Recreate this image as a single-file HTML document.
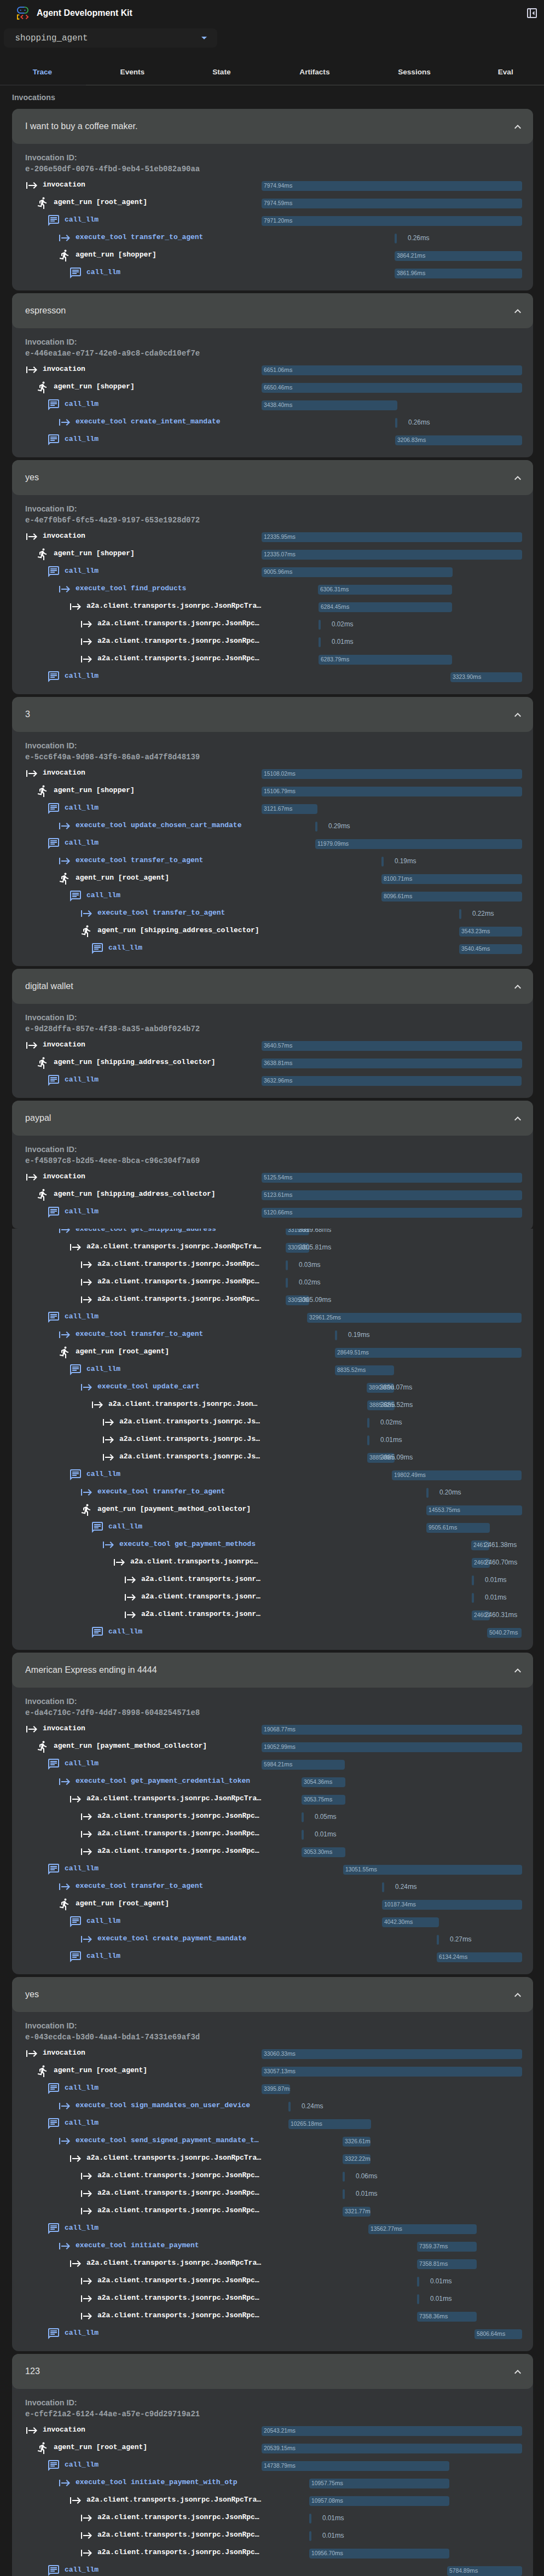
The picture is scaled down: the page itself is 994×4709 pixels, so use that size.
<!DOCTYPE html>
<html><head><meta charset="utf-8"><title>Agent Development Kit</title>
<style>

html,body{margin:0;padding:0;}
body{width:994px;height:4709px;background:#1b1b1b;position:relative;overflow:hidden;font-family:"Liberation Sans",sans-serif;}
.abs{position:absolute;}
.title{position:absolute;left:67px;top:13.700px;font-size:15.9px;font-weight:bold;color:#fff;line-height:20px;white-space:pre;}
.sel{position:absolute;left:7px;top:52px;width:390px;height:35px;border-radius:8px;background:#202020;}
.seltxt{position:absolute;left:27.500px;top:59.700px;font-family:"Liberation Mono",monospace;font-size:15.85px;color:#c4c7c5;line-height:20px;white-space:pre;}
.tab{position:absolute;top:121.800px;font-size:13.6px;font-weight:bold;color:#e3e3e3;line-height:20px;white-space:pre;transform:translateX(-50%);}
.tab.act{color:#8ab4f8;}
.tabline{position:absolute;left:0;top:155px;width:994px;height:1px;background:#444746;}
.tabline2{position:absolute;left:0;top:155px;width:157px;height:1px;background:#363839;}
.invs{position:absolute;left:22px;top:167.600px;font-size:14.2px;font-weight:bold;color:#9aa0a6;line-height:20px;white-space:pre;}
.card{position:absolute;left:22px;width:952px;background:#333537;border-radius:12px;}
.hd{position:absolute;left:0;top:0;width:952px;height:64px;background:#444746;border-radius:12px;}
.hdt{position:absolute;left:24px;top:20px;font-size:16.1px;color:#e3e3e3;line-height:22px;white-space:pre;}
.chev{position:absolute;left:912.300px;top:20.900px;width:24px;height:24px;fill:#e3e3e3;}
.idl{position:absolute;left:24px;top:78.500px;font-size:14.3px;font-weight:bold;color:#9aa0a6;line-height:20px;white-space:pre;}
.idv{position:absolute;left:24px;top:99.600px;font-family:"Liberation Mono",monospace;font-size:14px;font-weight:bold;color:#9aa0a6;line-height:20px;white-space:pre;}
.ic{position:absolute;width:24px;height:24px;}
.w{fill:#fff;color:#fff;}
.b{fill:#8ab4f8;color:#8ab4f8;}
.lb{position:absolute;font-family:"Liberation Mono",monospace;font-size:12.97px;font-weight:bold;line-height:20px;white-space:pre;overflow:hidden;text-overflow:ellipsis;}
.bar{position:absolute;height:18px;background:#2f4d65;border-radius:4px;box-sizing:border-box;padding-left:4px;overflow:hidden;font-size:10.3px;line-height:16.500px;color:#a3bacb;white-space:pre;}
.bar i{font-style:normal;font-size:11.3px;}
.sd{position:absolute;font-size:12.5px;line-height:15px;color:#a3bacb;white-space:pre;transform:scaleX(0.94);transform-origin:0 0;}
.sd i{font-style:normal;font-size:13.4px;}

</style></head><body>
<svg class="abs" style="left:28px;top:9px" width="30" height="30" viewBox="0 0 30 30">
<path d="M16.800 4.050 H9.350 a5.450 5.450 0 0 0 0 10.900 H16.800" fill="none" stroke="#4285f4" stroke-width="1.800"/>
<path d="M16.800 4.050 H17.650 a5.450 5.450 0 0 1 0 10.900 H16.800" fill="none" stroke="#34a853" stroke-width="1.800"/>
<circle cx="9.700" cy="9.700" r="1" fill="#4285f4"/><circle cx="17.500" cy="9.700" r="1" fill="#4285f4"/>
<path d="M7.400 18.400 H3.900 V25.750 H7.400" fill="none" stroke="#fbbc04" stroke-width="1.800"/>
<path d="M14 18.500 L10.300 22 L14 25.500" fill="none" stroke="#ea4335" stroke-width="1.800"/>
<path d="M19.500 18.500 L23.200 22 L19.500 25.500" fill="none" stroke="#ea4335" stroke-width="1.800"/>
</svg>
<div class="title">Agent Development Kit</div>
<svg class="abs" style="left:960px;top:12px" width="24" height="24" viewBox="0 0 24 24" fill="#d2d3e4">
<path fill-rule="evenodd" d="M5 3h14a2 2 0 0 1 2 2v14a2 2 0 0 1-2 2H5a2 2 0 0 1-2-2V5a2 2 0 0 1 2-2zm0 2v14h3V5H5zm5 0v14h9V5h-9z"/><path d="M16.500 8 v8 l-4-4z"/></svg>
<div class="sel"></div><div class="seltxt">shopping_agent</div>
<svg class="abs" style="left:368.300px;top:66.500px" width="10" height="5" viewBox="0 0 10 5"><path d="M0 0h10L5 5z" fill="#8ab4f8"/></svg>
<div class="tab act" style="left:77.4px">Trace</div>
<div class="tab" style="left:241.9px">Events</div>
<div class="tab" style="left:404.9px">State</div>
<div class="tab" style="left:574.9px">Artifacts</div>
<div class="tab" style="left:757px">Sessions</div>
<div class="tab" style="left:923.7px">Eval</div>
<div class="tabline"></div><div class="tabline2"></div>
<div class="invs">Invocations</div>
<div class="card" style="top:199px;height:332px">
<div class="hd"><div class="hdt">I want to buy a coffee maker.</div><svg class="chev" viewBox="0 0 24 24"><path d="M7.410 15.410L12 10.830l4.590 4.580L18 14l-6-6-6 6z"/></svg></div>
<div class="idl">Invocation ID:</div><div class="idv">e-206e50df-0076-4fbd-9eb4-51eb082a90aa</div>
<svg class="ic w" style="left:24px;top:128px" viewBox="0 0 24 24"><path d="M14.59 7.41L18.17 11H6v2h12.17l-3.59 3.59L16 18l6-6-6-6-1.41 1.41zM2 6v12h2V6H2z"/></svg>
<div class="lb w" style="left:55.9px;top:128.5px;width:399.9px">invocation</div>
<div class="bar" style="left:456px;top:132px;width:476px">7974.94<i>ms</i></div>
<svg class="ic w" style="left:44px;top:160px" viewBox="0 0 24 24"><path d="M13.49 5.48c1.1 0 2-.9 2-2s-.9-2-2-2-2 .9-2 2 .9 2 2 2zm-3.6 13.9l1-4.4 2.1 2v6h2v-7.5l-2.1-2 .6-3c1.3 1.5 3.3 2.5 5.5 2.5v-2c-1.9 0-3.5-1-4.3-2.4l-1-1.6c-.4-.6-1-1-1.7-1-.3 0-.5.1-.8.1l-5.2 2.2v4.700h2v-3.400l1.800-.700-1.600 8.100-4.900-1-.400 2 7 1.400z"/></svg>
<div class="lb w" style="left:75.9px;top:160.5px;width:379.9px">agent_run [root_agent]</div>
<div class="bar" style="left:456px;top:164px;width:476px">7974.59<i>ms</i></div>
<svg class="ic b" style="left:64px;top:192px" viewBox="0 0 24 24"><path d="M4 4h16v12H5.170L4 17.170V4m0-2c-1.100 0-1.990.900-1.990 2L2 22l4-4h14c1.100 0 2-.900 2-2V4c0-1.100-.900-2-2-2H4zm2 10h8v2H6v-2zm0-3h12v2H6V9zm0-3h12v2H6V6z"/></svg>
<div class="lb b" style="left:95.9px;top:192.5px;width:359.9px">call_llm</div>
<div class="bar" style="left:456px;top:196px;width:476px">7971.20<i>ms</i></div>
<svg class="ic b" style="left:84px;top:224px" viewBox="0 0 24 24"><path d="M14.59 7.41L18.17 11H6v2h12.17l-3.59 3.59L16 18l6-6-6-6-1.41 1.41zM2 6v12h2V6H2z"/></svg>
<div class="lb b" style="left:115.9px;top:224.5px;width:339.9px">execute_tool transfer_to_agent</div>
<div class="bar" style="left:699px;top:228px;width:4px"></div>
<div class="sd" style="left:723.0px;top:228px">0.26<i>ms</i></div>
<svg class="ic w" style="left:84px;top:256px" viewBox="0 0 24 24"><path d="M13.49 5.48c1.1 0 2-.9 2-2s-.9-2-2-2-2 .9-2 2 .9 2 2 2zm-3.6 13.9l1-4.4 2.1 2v6h2v-7.5l-2.1-2 .6-3c1.3 1.5 3.3 2.5 5.5 2.5v-2c-1.9 0-3.5-1-4.3-2.4l-1-1.6c-.4-.6-1-1-1.7-1-.3 0-.5.1-.8.1l-5.2 2.2v4.700h2v-3.400l1.800-.700-1.600 8.100-4.900-1-.400 2 7 1.400z"/></svg>
<div class="lb w" style="left:115.9px;top:256.5px;width:339.9px">agent_run [shopper]</div>
<div class="bar" style="left:699px;top:260px;width:233px">3864.21<i>ms</i></div>
<svg class="ic b" style="left:104px;top:288px" viewBox="0 0 24 24"><path d="M4 4h16v12H5.170L4 17.170V4m0-2c-1.100 0-1.990.900-1.990 2L2 22l4-4h14c1.100 0 2-.900 2-2V4c0-1.100-.900-2-2-2H4zm2 10h8v2H6v-2zm0-3h12v2H6V9zm0-3h12v2H6V6z"/></svg>
<div class="lb b" style="left:135.9px;top:288.5px;width:319.9px">call_llm</div>
<div class="bar" style="left:699px;top:292px;width:233px">3861.96<i>ms</i></div>
</div>
<div class="card" style="top:536px;height:300px">
<div class="hd"><div class="hdt">espresson</div><svg class="chev" viewBox="0 0 24 24"><path d="M7.410 15.410L12 10.830l4.590 4.580L18 14l-6-6-6 6z"/></svg></div>
<div class="idl">Invocation ID:</div><div class="idv">e-446ea1ae-e717-42e0-a9c8-cda0cd10ef7e</div>
<svg class="ic w" style="left:24px;top:128px" viewBox="0 0 24 24"><path d="M14.59 7.41L18.17 11H6v2h12.17l-3.59 3.59L16 18l6-6-6-6-1.41 1.41zM2 6v12h2V6H2z"/></svg>
<div class="lb w" style="left:55.9px;top:128.5px;width:399.9px">invocation</div>
<div class="bar" style="left:456px;top:132px;width:476px">6651.06<i>ms</i></div>
<svg class="ic w" style="left:44px;top:160px" viewBox="0 0 24 24"><path d="M13.49 5.48c1.1 0 2-.9 2-2s-.9-2-2-2-2 .9-2 2 .9 2 2 2zm-3.6 13.9l1-4.4 2.1 2v6h2v-7.5l-2.1-2 .6-3c1.3 1.5 3.3 2.5 5.5 2.5v-2c-1.9 0-3.5-1-4.3-2.4l-1-1.6c-.4-.6-1-1-1.7-1-.3 0-.5.1-.8.1l-5.2 2.2v4.700h2v-3.400l1.800-.700-1.600 8.100-4.900-1-.400 2 7 1.400z"/></svg>
<div class="lb w" style="left:75.9px;top:160.5px;width:379.9px">agent_run [shopper]</div>
<div class="bar" style="left:456px;top:164px;width:476px">6650.46<i>ms</i></div>
<svg class="ic b" style="left:64px;top:192px" viewBox="0 0 24 24"><path d="M4 4h16v12H5.170L4 17.170V4m0-2c-1.100 0-1.990.900-1.990 2L2 22l4-4h14c1.100 0 2-.900 2-2V4c0-1.100-.900-2-2-2H4zm2 10h8v2H6v-2zm0-3h12v2H6V9zm0-3h12v2H6V6z"/></svg>
<div class="lb b" style="left:95.9px;top:192.5px;width:359.9px">call_llm</div>
<div class="bar" style="left:456px;top:196px;width:248px">3438.40<i>ms</i></div>
<svg class="ic b" style="left:84px;top:224px" viewBox="0 0 24 24"><path d="M14.59 7.41L18.17 11H6v2h12.17l-3.59 3.59L16 18l6-6-6-6-1.41 1.41zM2 6v12h2V6H2z"/></svg>
<div class="lb b" style="left:115.9px;top:224.5px;width:339.9px">execute_tool create_intent_mandate</div>
<div class="bar" style="left:700px;top:228px;width:4px"></div>
<div class="sd" style="left:724.0px;top:228px">0.26<i>ms</i></div>
<svg class="ic b" style="left:64px;top:256px" viewBox="0 0 24 24"><path d="M4 4h16v12H5.170L4 17.170V4m0-2c-1.100 0-1.990.900-1.990 2L2 22l4-4h14c1.100 0 2-.900 2-2V4c0-1.100-.900-2-2-2H4zm2 10h8v2H6v-2zm0-3h12v2H6V9zm0-3h12v2H6V6z"/></svg>
<div class="lb b" style="left:95.9px;top:256.5px;width:359.9px">call_llm</div>
<div class="bar" style="left:700px;top:260px;width:232px">3206.83<i>ms</i></div>
</div>
<div class="card" style="top:841px;height:428px">
<div class="hd"><div class="hdt">yes</div><svg class="chev" viewBox="0 0 24 24"><path d="M7.410 15.410L12 10.830l4.590 4.580L18 14l-6-6-6 6z"/></svg></div>
<div class="idl">Invocation ID:</div><div class="idv">e-4e7f0b6f-6fc5-4a29-9197-653e1928d072</div>
<svg class="ic w" style="left:24px;top:128px" viewBox="0 0 24 24"><path d="M14.59 7.41L18.17 11H6v2h12.17l-3.59 3.59L16 18l6-6-6-6-1.41 1.41zM2 6v12h2V6H2z"/></svg>
<div class="lb w" style="left:55.9px;top:128.5px;width:399.9px">invocation</div>
<div class="bar" style="left:456px;top:132px;width:476px">12335.95<i>ms</i></div>
<svg class="ic w" style="left:44px;top:160px" viewBox="0 0 24 24"><path d="M13.49 5.48c1.1 0 2-.9 2-2s-.9-2-2-2-2 .9-2 2 .9 2 2 2zm-3.6 13.9l1-4.4 2.1 2v6h2v-7.5l-2.1-2 .6-3c1.3 1.5 3.3 2.5 5.5 2.5v-2c-1.9 0-3.5-1-4.3-2.4l-1-1.6c-.4-.6-1-1-1.7-1-.3 0-.5.1-.8.1l-5.2 2.2v4.700h2v-3.400l1.800-.700-1.600 8.100-4.900-1-.400 2 7 1.400z"/></svg>
<div class="lb w" style="left:75.9px;top:160.5px;width:379.9px">agent_run [shopper]</div>
<div class="bar" style="left:456px;top:164px;width:476px">12335.07<i>ms</i></div>
<svg class="ic b" style="left:64px;top:192px" viewBox="0 0 24 24"><path d="M4 4h16v12H5.170L4 17.170V4m0-2c-1.100 0-1.990.900-1.990 2L2 22l4-4h14c1.100 0 2-.900 2-2V4c0-1.100-.900-2-2-2H4zm2 10h8v2H6v-2zm0-3h12v2H6V9zm0-3h12v2H6V6z"/></svg>
<div class="lb b" style="left:95.9px;top:192.5px;width:359.9px">call_llm</div>
<div class="bar" style="left:456px;top:196px;width:349px">9005.96<i>ms</i></div>
<svg class="ic b" style="left:84px;top:224px" viewBox="0 0 24 24"><path d="M14.59 7.41L18.17 11H6v2h12.17l-3.59 3.59L16 18l6-6-6-6-1.41 1.41zM2 6v12h2V6H2z"/></svg>
<div class="lb b" style="left:115.9px;top:224.5px;width:339.9px">execute_tool find_products</div>
<div class="bar" style="left:559px;top:228px;width:245px">6306.31<i>ms</i></div>
<svg class="ic w" style="left:104px;top:256px" viewBox="0 0 24 24"><path d="M14.59 7.41L18.17 11H6v2h12.17l-3.59 3.59L16 18l6-6-6-6-1.41 1.41zM2 6v12h2V6H2z"/></svg>
<div class="lb w" style="left:135.9px;top:256.5px;width:319.9px">a2a.client.transports.jsonrpc.JsonRpcTransport.send_message</div>
<div class="bar" style="left:560px;top:260px;width:244px">6284.45<i>ms</i></div>
<svg class="ic w" style="left:124px;top:288px" viewBox="0 0 24 24"><path d="M14.59 7.41L18.17 11H6v2h12.17l-3.59 3.59L16 18l6-6-6-6-1.41 1.41zM2 6v12h2V6H2z"/></svg>
<div class="lb w" style="left:155.9px;top:288.5px;width:299.9px">a2a.client.transports.jsonrpc.JsonRpcTransport.send_message</div>
<div class="bar" style="left:560px;top:292px;width:4px"></div>
<div class="sd" style="left:584.0px;top:292px">0.02<i>ms</i></div>
<svg class="ic w" style="left:124px;top:320px" viewBox="0 0 24 24"><path d="M14.59 7.41L18.17 11H6v2h12.17l-3.59 3.59L16 18l6-6-6-6-1.41 1.41zM2 6v12h2V6H2z"/></svg>
<div class="lb w" style="left:155.9px;top:320.5px;width:299.9px">a2a.client.transports.jsonrpc.JsonRpcTransport.send_message</div>
<div class="bar" style="left:560px;top:324px;width:4px"></div>
<div class="sd" style="left:584.0px;top:324px">0.01<i>ms</i></div>
<svg class="ic w" style="left:124px;top:352px" viewBox="0 0 24 24"><path d="M14.59 7.41L18.17 11H6v2h12.17l-3.59 3.59L16 18l6-6-6-6-1.41 1.41zM2 6v12h2V6H2z"/></svg>
<div class="lb w" style="left:155.9px;top:352.5px;width:299.9px">a2a.client.transports.jsonrpc.JsonRpcTransport.send_message</div>
<div class="bar" style="left:560px;top:356px;width:244px">6283.79<i>ms</i></div>
<svg class="ic b" style="left:64px;top:384px" viewBox="0 0 24 24"><path d="M4 4h16v12H5.170L4 17.170V4m0-2c-1.100 0-1.990.900-1.990 2L2 22l4-4h14c1.100 0 2-.900 2-2V4c0-1.100-.900-2-2-2H4zm2 10h8v2H6v-2zm0-3h12v2H6V9zm0-3h12v2H6V6z"/></svg>
<div class="lb b" style="left:95.9px;top:384.5px;width:359.9px">call_llm</div>
<div class="bar" style="left:801px;top:388px;width:131px">3323.90<i>ms</i></div>
</div>
<div class="card" style="top:1274px;height:492px">
<div class="hd"><div class="hdt">3</div><svg class="chev" viewBox="0 0 24 24"><path d="M7.410 15.410L12 10.830l4.590 4.580L18 14l-6-6-6 6z"/></svg></div>
<div class="idl">Invocation ID:</div><div class="idv">e-5cc6f49a-9d98-43f6-86a0-ad47f8d48139</div>
<svg class="ic w" style="left:24px;top:128px" viewBox="0 0 24 24"><path d="M14.59 7.41L18.17 11H6v2h12.17l-3.59 3.59L16 18l6-6-6-6-1.41 1.41zM2 6v12h2V6H2z"/></svg>
<div class="lb w" style="left:55.9px;top:128.5px;width:399.9px">invocation</div>
<div class="bar" style="left:456px;top:132px;width:476px">15108.02<i>ms</i></div>
<svg class="ic w" style="left:44px;top:160px" viewBox="0 0 24 24"><path d="M13.49 5.48c1.1 0 2-.9 2-2s-.9-2-2-2-2 .9-2 2 .9 2 2 2zm-3.6 13.9l1-4.4 2.1 2v6h2v-7.5l-2.1-2 .6-3c1.3 1.5 3.3 2.5 5.5 2.5v-2c-1.9 0-3.5-1-4.3-2.4l-1-1.6c-.4-.6-1-1-1.7-1-.3 0-.5.1-.8.1l-5.2 2.2v4.700h2v-3.400l1.800-.700-1.600 8.100-4.900-1-.400 2 7 1.400z"/></svg>
<div class="lb w" style="left:75.9px;top:160.5px;width:379.9px">agent_run [shopper]</div>
<div class="bar" style="left:456px;top:164px;width:476px">15106.79<i>ms</i></div>
<svg class="ic b" style="left:64px;top:192px" viewBox="0 0 24 24"><path d="M4 4h16v12H5.170L4 17.170V4m0-2c-1.100 0-1.990.900-1.990 2L2 22l4-4h14c1.100 0 2-.900 2-2V4c0-1.100-.900-2-2-2H4zm2 10h8v2H6v-2zm0-3h12v2H6V9zm0-3h12v2H6V6z"/></svg>
<div class="lb b" style="left:95.9px;top:192.5px;width:359.9px">call_llm</div>
<div class="bar" style="left:456px;top:196px;width:102px">3121.67<i>ms</i></div>
<svg class="ic b" style="left:84px;top:224px" viewBox="0 0 24 24"><path d="M14.59 7.41L18.17 11H6v2h12.17l-3.59 3.59L16 18l6-6-6-6-1.41 1.41zM2 6v12h2V6H2z"/></svg>
<div class="lb b" style="left:115.9px;top:224.5px;width:339.9px">execute_tool update_chosen_cart_mandate</div>
<div class="bar" style="left:554px;top:228px;width:4px"></div>
<div class="sd" style="left:578.0px;top:228px">0.29<i>ms</i></div>
<svg class="ic b" style="left:64px;top:256px" viewBox="0 0 24 24"><path d="M4 4h16v12H5.170L4 17.170V4m0-2c-1.100 0-1.990.900-1.990 2L2 22l4-4h14c1.100 0 2-.900 2-2V4c0-1.100-.900-2-2-2H4zm2 10h8v2H6v-2zm0-3h12v2H6V9zm0-3h12v2H6V6z"/></svg>
<div class="lb b" style="left:95.9px;top:256.5px;width:359.9px">call_llm</div>
<div class="bar" style="left:554px;top:260px;width:378px">11979.09<i>ms</i></div>
<svg class="ic b" style="left:84px;top:288px" viewBox="0 0 24 24"><path d="M14.59 7.41L18.17 11H6v2h12.17l-3.59 3.59L16 18l6-6-6-6-1.41 1.41zM2 6v12h2V6H2z"/></svg>
<div class="lb b" style="left:115.9px;top:288.5px;width:339.9px">execute_tool transfer_to_agent</div>
<div class="bar" style="left:675px;top:292px;width:4px"></div>
<div class="sd" style="left:699.0px;top:292px">0.19<i>ms</i></div>
<svg class="ic w" style="left:84px;top:320px" viewBox="0 0 24 24"><path d="M13.49 5.48c1.1 0 2-.9 2-2s-.9-2-2-2-2 .9-2 2 .9 2 2 2zm-3.6 13.9l1-4.4 2.1 2v6h2v-7.5l-2.1-2 .6-3c1.3 1.5 3.3 2.5 5.5 2.5v-2c-1.9 0-3.5-1-4.3-2.4l-1-1.6c-.4-.6-1-1-1.7-1-.3 0-.5.1-.8.1l-5.2 2.2v4.700h2v-3.400l1.800-.700-1.600 8.100-4.900-1-.400 2 7 1.400z"/></svg>
<div class="lb w" style="left:115.9px;top:320.5px;width:339.9px">agent_run [root_agent]</div>
<div class="bar" style="left:675px;top:324px;width:257px">8100.71<i>ms</i></div>
<svg class="ic b" style="left:104px;top:352px" viewBox="0 0 24 24"><path d="M4 4h16v12H5.170L4 17.170V4m0-2c-1.100 0-1.990.900-1.990 2L2 22l4-4h14c1.100 0 2-.900 2-2V4c0-1.100-.900-2-2-2H4zm2 10h8v2H6v-2zm0-3h12v2H6V9zm0-3h12v2H6V6z"/></svg>
<div class="lb b" style="left:135.9px;top:352.5px;width:319.9px">call_llm</div>
<div class="bar" style="left:675px;top:356px;width:257px">8096.61<i>ms</i></div>
<svg class="ic b" style="left:124px;top:384px" viewBox="0 0 24 24"><path d="M14.59 7.41L18.17 11H6v2h12.17l-3.59 3.59L16 18l6-6-6-6-1.41 1.41zM2 6v12h2V6H2z"/></svg>
<div class="lb b" style="left:155.9px;top:384.5px;width:299.9px">execute_tool transfer_to_agent</div>
<div class="bar" style="left:817px;top:388px;width:4px"></div>
<div class="sd" style="left:841.0px;top:388px">0.22<i>ms</i></div>
<svg class="ic w" style="left:124px;top:416px" viewBox="0 0 24 24"><path d="M13.49 5.48c1.1 0 2-.9 2-2s-.9-2-2-2-2 .9-2 2 .9 2 2 2zm-3.6 13.9l1-4.4 2.1 2v6h2v-7.5l-2.1-2 .6-3c1.3 1.5 3.3 2.5 5.5 2.5v-2c-1.9 0-3.5-1-4.3-2.4l-1-1.6c-.4-.6-1-1-1.7-1-.3 0-.5.1-.8.1l-5.2 2.2v4.700h2v-3.400l1.800-.700-1.600 8.100-4.900-1-.400 2 7 1.400z"/></svg>
<div class="lb w" style="left:155.9px;top:416.5px;width:299.9px">agent_run [shipping_address_collector]</div>
<div class="bar" style="left:817px;top:420px;width:115px">3543.23<i>ms</i></div>
<svg class="ic b" style="left:144px;top:448px" viewBox="0 0 24 24"><path d="M4 4h16v12H5.170L4 17.170V4m0-2c-1.100 0-1.990.900-1.990 2L2 22l4-4h14c1.100 0 2-.900 2-2V4c0-1.100-.900-2-2-2H4zm2 10h8v2H6v-2zm0-3h12v2H6V9zm0-3h12v2H6V6z"/></svg>
<div class="lb b" style="left:175.9px;top:448.5px;width:279.9px">call_llm</div>
<div class="bar" style="left:817px;top:452px;width:115px">3540.45<i>ms</i></div>
</div>
<div class="card" style="top:1771px;height:236px">
<div class="hd"><div class="hdt">digital wallet</div><svg class="chev" viewBox="0 0 24 24"><path d="M7.410 15.410L12 10.830l4.590 4.580L18 14l-6-6-6 6z"/></svg></div>
<div class="idl">Invocation ID:</div><div class="idv">e-9d28dffa-857e-4f38-8a35-aabd0f024b72</div>
<svg class="ic w" style="left:24px;top:128px" viewBox="0 0 24 24"><path d="M14.59 7.41L18.17 11H6v2h12.17l-3.59 3.59L16 18l6-6-6-6-1.41 1.41zM2 6v12h2V6H2z"/></svg>
<div class="lb w" style="left:55.9px;top:128.5px;width:399.9px">invocation</div>
<div class="bar" style="left:456px;top:132px;width:476px">3640.57<i>ms</i></div>
<svg class="ic w" style="left:44px;top:160px" viewBox="0 0 24 24"><path d="M13.49 5.48c1.1 0 2-.9 2-2s-.9-2-2-2-2 .9-2 2 .9 2 2 2zm-3.6 13.9l1-4.4 2.1 2v6h2v-7.5l-2.1-2 .6-3c1.3 1.5 3.3 2.5 5.5 2.5v-2c-1.9 0-3.5-1-4.3-2.4l-1-1.6c-.4-.6-1-1-1.7-1-.3 0-.5.1-.8.1l-5.2 2.2v4.700h2v-3.400l1.800-.700-1.600 8.100-4.900-1-.400 2 7 1.400z"/></svg>
<div class="lb w" style="left:75.9px;top:160.5px;width:379.9px">agent_run [shipping_address_collector]</div>
<div class="bar" style="left:456px;top:164px;width:476px">3638.81<i>ms</i></div>
<svg class="ic b" style="left:64px;top:192px" viewBox="0 0 24 24"><path d="M4 4h16v12H5.170L4 17.170V4m0-2c-1.100 0-1.990.900-1.990 2L2 22l4-4h14c1.100 0 2-.900 2-2V4c0-1.100-.900-2-2-2H4zm2 10h8v2H6v-2zm0-3h12v2H6V9zm0-3h12v2H6V6z"/></svg>
<div class="lb b" style="left:95.9px;top:192.5px;width:359.9px">call_llm</div>
<div class="bar" style="left:456px;top:196px;width:475px">3632.96<i>ms</i></div>
</div>
<div class="card" style="top:2012px;height:1004px">
<div class="hd"><div class="hdt">paypal</div><svg class="chev" viewBox="0 0 24 24"><path d="M7.410 15.410L12 10.830l4.590 4.580L18 14l-6-6-6 6z"/></svg></div>
<div class="idl">Invocation ID:</div><div class="idv">e-f45897c8-b2d5-4eee-8bca-c96c304f7a69</div>
<svg class="ic w" style="left:24px;top:128px" viewBox="0 0 24 24"><path d="M14.59 7.41L18.17 11H6v2h12.17l-3.59 3.59L16 18l6-6-6-6-1.41 1.41zM2 6v12h2V6H2z"/></svg>
<div class="lb w" style="left:55.9px;top:128.5px;width:399.9px">invocation</div>
<div class="bar" style="left:456px;top:132px;width:476px">5125.54<i>ms</i></div>
<svg class="ic w" style="left:44px;top:160px" viewBox="0 0 24 24"><path d="M13.49 5.48c1.1 0 2-.9 2-2s-.9-2-2-2-2 .9-2 2 .9 2 2 2zm-3.6 13.9l1-4.4 2.1 2v6h2v-7.5l-2.1-2 .6-3c1.3 1.5 3.3 2.5 5.5 2.5v-2c-1.9 0-3.5-1-4.3-2.4l-1-1.6c-.4-.6-1-1-1.7-1-.3 0-.5.1-.8.1l-5.2 2.2v4.700h2v-3.400l1.800-.700-1.600 8.100-4.900-1-.400 2 7 1.400z"/></svg>
<div class="lb w" style="left:75.9px;top:160.5px;width:379.9px">agent_run [shipping_address_collector]</div>
<div class="bar" style="left:456px;top:164px;width:476px">5123.61<i>ms</i></div>
<svg class="ic b" style="left:64px;top:192px" viewBox="0 0 24 24"><path d="M4 4h16v12H5.170L4 17.170V4m0-2c-1.100 0-1.990.900-1.990 2L2 22l4-4h14c1.100 0 2-.900 2-2V4c0-1.100-.900-2-2-2H4zm2 10h8v2H6v-2zm0-3h12v2H6V9zm0-3h12v2H6V6z"/></svg>
<div class="lb b" style="left:95.9px;top:192.5px;width:359.9px">call_llm</div>
<div class="bar" style="left:456px;top:196px;width:476px">5120.66<i>ms</i></div>
<svg class="ic b" style="left:84px;top:224px" viewBox="0 0 24 24"><path d="M14.59 7.41L18.17 11H6v2h12.17l-3.59 3.59L16 18l6-6-6-6-1.41 1.41zM2 6v12h2V6H2z"/></svg>
<div class="lb b" style="left:115.9px;top:224.5px;width:339.9px">execute_tool get_shipping_address</div>
<div class="bar" style="left:500px;top:228px;width:43px">3319.68<i>ms</i></div>
<div class="sd" style="left:524.0px;top:228px">3319.68<i>ms</i></div>
<svg class="ic w" style="left:104px;top:256px" viewBox="0 0 24 24"><path d="M14.59 7.41L18.17 11H6v2h12.17l-3.59 3.59L16 18l6-6-6-6-1.41 1.41zM2 6v12h2V6H2z"/></svg>
<div class="lb w" style="left:135.9px;top:256.5px;width:319.9px">a2a.client.transports.jsonrpc.JsonRpcTransport.send_message</div>
<div class="bar" style="left:500px;top:260px;width:43px">3305.81<i>ms</i></div>
<div class="sd" style="left:524.0px;top:260px">3305.81<i>ms</i></div>
<svg class="ic w" style="left:124px;top:288px" viewBox="0 0 24 24"><path d="M14.59 7.41L18.17 11H6v2h12.17l-3.59 3.59L16 18l6-6-6-6-1.41 1.41zM2 6v12h2V6H2z"/></svg>
<div class="lb w" style="left:155.9px;top:288.5px;width:299.9px">a2a.client.transports.jsonrpc.JsonRpcTransport.send_message</div>
<div class="bar" style="left:500px;top:292px;width:4px"></div>
<div class="sd" style="left:524.0px;top:292px">0.03<i>ms</i></div>
<svg class="ic w" style="left:124px;top:320px" viewBox="0 0 24 24"><path d="M14.59 7.41L18.17 11H6v2h12.17l-3.59 3.59L16 18l6-6-6-6-1.41 1.41zM2 6v12h2V6H2z"/></svg>
<div class="lb w" style="left:155.9px;top:320.5px;width:299.9px">a2a.client.transports.jsonrpc.JsonRpcTransport.send_message</div>
<div class="bar" style="left:500px;top:324px;width:4px"></div>
<div class="sd" style="left:524.0px;top:324px">0.02<i>ms</i></div>
<svg class="ic w" style="left:124px;top:352px" viewBox="0 0 24 24"><path d="M14.59 7.41L18.17 11H6v2h12.17l-3.59 3.59L16 18l6-6-6-6-1.41 1.41zM2 6v12h2V6H2z"/></svg>
<div class="lb w" style="left:155.9px;top:352.5px;width:299.9px">a2a.client.transports.jsonrpc.JsonRpcTransport.send_message</div>
<div class="bar" style="left:500px;top:356px;width:43px">3305.09<i>ms</i></div>
<div class="sd" style="left:524.0px;top:356px">3305.09<i>ms</i></div>
<svg class="ic b" style="left:64px;top:384px" viewBox="0 0 24 24"><path d="M4 4h16v12H5.170L4 17.170V4m0-2c-1.100 0-1.990.900-1.990 2L2 22l4-4h14c1.100 0 2-.900 2-2V4c0-1.100-.900-2-2-2H4zm2 10h8v2H6v-2zm0-3h12v2H6V9zm0-3h12v2H6V6z"/></svg>
<div class="lb b" style="left:95.9px;top:384.5px;width:359.9px">call_llm</div>
<div class="bar" style="left:539px;top:388px;width:392px">32961.25<i>ms</i></div>
<svg class="ic b" style="left:84px;top:416px" viewBox="0 0 24 24"><path d="M14.59 7.41L18.17 11H6v2h12.17l-3.59 3.59L16 18l6-6-6-6-1.41 1.41zM2 6v12h2V6H2z"/></svg>
<div class="lb b" style="left:115.9px;top:416.5px;width:339.9px">execute_tool transfer_to_agent</div>
<div class="bar" style="left:590px;top:420px;width:4px"></div>
<div class="sd" style="left:614.0px;top:420px">0.19<i>ms</i></div>
<svg class="ic w" style="left:84px;top:448px" viewBox="0 0 24 24"><path d="M13.49 5.48c1.1 0 2-.9 2-2s-.9-2-2-2-2 .9-2 2 .9 2 2 2zm-3.6 13.9l1-4.4 2.1 2v6h2v-7.5l-2.1-2 .6-3c1.3 1.5 3.3 2.5 5.5 2.5v-2c-1.9 0-3.5-1-4.3-2.4l-1-1.6c-.4-.6-1-1-1.7-1-.3 0-.5.1-.8.1l-5.2 2.2v4.700h2v-3.400l1.800-.700-1.600 8.100-4.900-1-.400 2 7 1.400z"/></svg>
<div class="lb w" style="left:115.9px;top:448.5px;width:339.9px">agent_run [root_agent]</div>
<div class="bar" style="left:590px;top:452px;width:341px">28649.51<i>ms</i></div>
<svg class="ic b" style="left:104px;top:480px" viewBox="0 0 24 24"><path d="M4 4h16v12H5.170L4 17.170V4m0-2c-1.100 0-1.990.900-1.990 2L2 22l4-4h14c1.100 0 2-.900 2-2V4c0-1.100-.900-2-2-2H4zm2 10h8v2H6v-2zm0-3h12v2H6V9zm0-3h12v2H6V6z"/></svg>
<div class="lb b" style="left:135.9px;top:480.5px;width:319.9px">call_llm</div>
<div class="bar" style="left:590px;top:484px;width:108px">8835.52<i>ms</i></div>
<svg class="ic b" style="left:124px;top:512px" viewBox="0 0 24 24"><path d="M14.59 7.41L18.17 11H6v2h12.17l-3.59 3.59L16 18l6-6-6-6-1.41 1.41zM2 6v12h2V6H2z"/></svg>
<div class="lb b" style="left:155.9px;top:512.5px;width:299.9px">execute_tool update_cart</div>
<div class="bar" style="left:648px;top:516px;width:50px">3890.07<i>ms</i></div>
<div class="sd" style="left:672.0px;top:516px">3890.07<i>ms</i></div>
<svg class="ic w" style="left:144px;top:544px" viewBox="0 0 24 24"><path d="M14.59 7.41L18.17 11H6v2h12.17l-3.59 3.59L16 18l6-6-6-6-1.41 1.41zM2 6v12h2V6H2z"/></svg>
<div class="lb w" style="left:175.9px;top:544.5px;width:279.9px">a2a.client.transports.jsonrpc.JsonRpcTransport.send_message</div>
<div class="bar" style="left:649px;top:548px;width:50px">3885.52<i>ms</i></div>
<div class="sd" style="left:673.0px;top:548px">3885.52<i>ms</i></div>
<svg class="ic w" style="left:164px;top:576px" viewBox="0 0 24 24"><path d="M14.59 7.41L18.17 11H6v2h12.17l-3.59 3.59L16 18l6-6-6-6-1.41 1.41zM2 6v12h2V6H2z"/></svg>
<div class="lb w" style="left:195.9px;top:576.5px;width:259.9px">a2a.client.transports.jsonrpc.JsonRpcTransport.send_message</div>
<div class="bar" style="left:649px;top:580px;width:4px"></div>
<div class="sd" style="left:673.0px;top:580px">0.02<i>ms</i></div>
<svg class="ic w" style="left:164px;top:608px" viewBox="0 0 24 24"><path d="M14.59 7.41L18.17 11H6v2h12.17l-3.59 3.59L16 18l6-6-6-6-1.41 1.41zM2 6v12h2V6H2z"/></svg>
<div class="lb w" style="left:195.9px;top:608.5px;width:259.9px">a2a.client.transports.jsonrpc.JsonRpcTransport.send_message</div>
<div class="bar" style="left:649px;top:612px;width:4px"></div>
<div class="sd" style="left:673.0px;top:612px">0.01<i>ms</i></div>
<svg class="ic w" style="left:164px;top:640px" viewBox="0 0 24 24"><path d="M14.59 7.41L18.17 11H6v2h12.17l-3.59 3.59L16 18l6-6-6-6-1.41 1.41zM2 6v12h2V6H2z"/></svg>
<div class="lb w" style="left:195.9px;top:640.5px;width:259.9px">a2a.client.transports.jsonrpc.JsonRpcTransport.send_message</div>
<div class="bar" style="left:649px;top:644px;width:50px">3885.09<i>ms</i></div>
<div class="sd" style="left:673.0px;top:644px">3885.09<i>ms</i></div>
<svg class="ic b" style="left:104px;top:672px" viewBox="0 0 24 24"><path d="M4 4h16v12H5.170L4 17.170V4m0-2c-1.100 0-1.990.900-1.990 2L2 22l4-4h14c1.100 0 2-.900 2-2V4c0-1.100-.900-2-2-2H4zm2 10h8v2H6v-2zm0-3h12v2H6V9zm0-3h12v2H6V6z"/></svg>
<div class="lb b" style="left:135.9px;top:672.5px;width:319.9px">call_llm</div>
<div class="bar" style="left:694px;top:676px;width:237px">19802.49<i>ms</i></div>
<svg class="ic b" style="left:124px;top:704px" viewBox="0 0 24 24"><path d="M14.59 7.41L18.17 11H6v2h12.17l-3.59 3.59L16 18l6-6-6-6-1.41 1.41zM2 6v12h2V6H2z"/></svg>
<div class="lb b" style="left:155.9px;top:704.5px;width:299.9px">execute_tool transfer_to_agent</div>
<div class="bar" style="left:757px;top:708px;width:4px"></div>
<div class="sd" style="left:781.0px;top:708px">0.20<i>ms</i></div>
<svg class="ic w" style="left:124px;top:736px" viewBox="0 0 24 24"><path d="M13.49 5.48c1.1 0 2-.9 2-2s-.9-2-2-2-2 .9-2 2 .9 2 2 2zm-3.6 13.9l1-4.4 2.1 2v6h2v-7.5l-2.1-2 .6-3c1.3 1.5 3.3 2.5 5.5 2.5v-2c-1.9 0-3.5-1-4.3-2.4l-1-1.6c-.4-.6-1-1-1.7-1-.3 0-.5.1-.8.1l-5.2 2.2v4.700h2v-3.400l1.800-.700-1.600 8.100-4.900-1-.400 2 7 1.400z"/></svg>
<div class="lb w" style="left:155.9px;top:736.5px;width:299.9px">agent_run [payment_method_collector]</div>
<div class="bar" style="left:757px;top:740px;width:175px">14553.75<i>ms</i></div>
<svg class="ic b" style="left:144px;top:768px" viewBox="0 0 24 24"><path d="M4 4h16v12H5.170L4 17.170V4m0-2c-1.100 0-1.990.900-1.990 2L2 22l4-4h14c1.100 0 2-.900 2-2V4c0-1.100-.900-2-2-2H4zm2 10h8v2H6v-2zm0-3h12v2H6V9zm0-3h12v2H6V6z"/></svg>
<div class="lb b" style="left:175.9px;top:768.5px;width:279.9px">call_llm</div>
<div class="bar" style="left:757px;top:772px;width:116px">9505.61<i>ms</i></div>
<svg class="ic b" style="left:164px;top:800px" viewBox="0 0 24 24"><path d="M14.59 7.41L18.17 11H6v2h12.17l-3.59 3.59L16 18l6-6-6-6-1.41 1.41zM2 6v12h2V6H2z"/></svg>
<div class="lb b" style="left:195.9px;top:800.5px;width:259.9px">execute_tool get_payment_methods</div>
<div class="bar" style="left:839px;top:804px;width:33px">2461.38<i>ms</i></div>
<div class="sd" style="left:863.0px;top:804px">2461.38<i>ms</i></div>
<svg class="ic w" style="left:184px;top:832px" viewBox="0 0 24 24"><path d="M14.59 7.41L18.17 11H6v2h12.17l-3.59 3.59L16 18l6-6-6-6-1.41 1.41zM2 6v12h2V6H2z"/></svg>
<div class="lb w" style="left:215.9px;top:832.5px;width:239.9px">a2a.client.transports.jsonrpc.JsonRpcTransport.send_message</div>
<div class="bar" style="left:840px;top:836px;width:33px">2460.70<i>ms</i></div>
<div class="sd" style="left:864.0px;top:836px">2460.70<i>ms</i></div>
<svg class="ic w" style="left:204px;top:864px" viewBox="0 0 24 24"><path d="M14.59 7.41L18.17 11H6v2h12.17l-3.59 3.59L16 18l6-6-6-6-1.41 1.41zM2 6v12h2V6H2z"/></svg>
<div class="lb w" style="left:235.9px;top:864.5px;width:219.9px">a2a.client.transports.jsonrpc.JsonRpcTransport.send_message</div>
<div class="bar" style="left:840px;top:868px;width:4px"></div>
<div class="sd" style="left:864.0px;top:868px">0.01<i>ms</i></div>
<svg class="ic w" style="left:204px;top:896px" viewBox="0 0 24 24"><path d="M14.59 7.41L18.17 11H6v2h12.17l-3.59 3.59L16 18l6-6-6-6-1.41 1.41zM2 6v12h2V6H2z"/></svg>
<div class="lb w" style="left:235.9px;top:896.5px;width:219.9px">a2a.client.transports.jsonrpc.JsonRpcTransport.send_message</div>
<div class="bar" style="left:840px;top:900px;width:4px"></div>
<div class="sd" style="left:864.0px;top:900px">0.01<i>ms</i></div>
<svg class="ic w" style="left:204px;top:928px" viewBox="0 0 24 24"><path d="M14.59 7.41L18.17 11H6v2h12.17l-3.59 3.59L16 18l6-6-6-6-1.41 1.41zM2 6v12h2V6H2z"/></svg>
<div class="lb w" style="left:235.9px;top:928.5px;width:219.9px">a2a.client.transports.jsonrpc.JsonRpcTransport.send_message</div>
<div class="bar" style="left:840px;top:932px;width:33px">2460.31<i>ms</i></div>
<div class="sd" style="left:864.0px;top:932px">2460.31<i>ms</i></div>
<svg class="ic b" style="left:144px;top:960px" viewBox="0 0 24 24"><path d="M4 4h16v12H5.170L4 17.170V4m0-2c-1.100 0-1.990.900-1.990 2L2 22l4-4h14c1.100 0 2-.900 2-2V4c0-1.100-.900-2-2-2H4zm2 10h8v2H6v-2zm0-3h12v2H6V9zm0-3h12v2H6V6z"/></svg>
<div class="lb b" style="left:175.9px;top:960.5px;width:279.9px">call_llm</div>
<div class="bar" style="left:868px;top:964px;width:63px">5040.27<i>ms</i></div>
</div>
<div class="card" style="top:3021px;height:588px">
<div class="hd"><div class="hdt">American Express ending in 4444</div><svg class="chev" viewBox="0 0 24 24"><path d="M7.410 15.410L12 10.830l4.590 4.580L18 14l-6-6-6 6z"/></svg></div>
<div class="idl">Invocation ID:</div><div class="idv">e-da4c710c-7df0-4dd7-8998-6048254571e8</div>
<svg class="ic w" style="left:24px;top:128px" viewBox="0 0 24 24"><path d="M14.59 7.41L18.17 11H6v2h12.17l-3.59 3.59L16 18l6-6-6-6-1.41 1.41zM2 6v12h2V6H2z"/></svg>
<div class="lb w" style="left:55.9px;top:128.5px;width:399.9px">invocation</div>
<div class="bar" style="left:456px;top:132px;width:476px">19068.77<i>ms</i></div>
<svg class="ic w" style="left:44px;top:160px" viewBox="0 0 24 24"><path d="M13.49 5.48c1.1 0 2-.9 2-2s-.9-2-2-2-2 .9-2 2 .9 2 2 2zm-3.6 13.9l1-4.4 2.1 2v6h2v-7.5l-2.1-2 .6-3c1.3 1.5 3.3 2.5 5.5 2.5v-2c-1.9 0-3.5-1-4.3-2.4l-1-1.6c-.4-.6-1-1-1.7-1-.3 0-.5.1-.8.1l-5.2 2.2v4.700h2v-3.400l1.800-.700-1.600 8.100-4.900-1-.400 2 7 1.400z"/></svg>
<div class="lb w" style="left:75.9px;top:160.5px;width:379.9px">agent_run [payment_method_collector]</div>
<div class="bar" style="left:456px;top:164px;width:476px">19052.99<i>ms</i></div>
<svg class="ic b" style="left:64px;top:192px" viewBox="0 0 24 24"><path d="M4 4h16v12H5.170L4 17.170V4m0-2c-1.100 0-1.990.900-1.990 2L2 22l4-4h14c1.100 0 2-.900 2-2V4c0-1.100-.900-2-2-2H4zm2 10h8v2H6v-2zm0-3h12v2H6V9zm0-3h12v2H6V6z"/></svg>
<div class="lb b" style="left:95.9px;top:192.5px;width:359.9px">call_llm</div>
<div class="bar" style="left:456px;top:196px;width:152px">5984.21<i>ms</i></div>
<svg class="ic b" style="left:84px;top:224px" viewBox="0 0 24 24"><path d="M14.59 7.41L18.17 11H6v2h12.17l-3.59 3.59L16 18l6-6-6-6-1.41 1.41zM2 6v12h2V6H2z"/></svg>
<div class="lb b" style="left:115.9px;top:224.5px;width:339.9px">execute_tool get_payment_credential_token</div>
<div class="bar" style="left:529px;top:228px;width:80px">3054.36<i>ms</i></div>
<svg class="ic w" style="left:104px;top:256px" viewBox="0 0 24 24"><path d="M14.59 7.41L18.17 11H6v2h12.17l-3.59 3.59L16 18l6-6-6-6-1.41 1.41zM2 6v12h2V6H2z"/></svg>
<div class="lb w" style="left:135.9px;top:256.5px;width:319.9px">a2a.client.transports.jsonrpc.JsonRpcTransport.send_message</div>
<div class="bar" style="left:529px;top:260px;width:80px">3053.75<i>ms</i></div>
<svg class="ic w" style="left:124px;top:288px" viewBox="0 0 24 24"><path d="M14.59 7.41L18.17 11H6v2h12.17l-3.59 3.59L16 18l6-6-6-6-1.41 1.41zM2 6v12h2V6H2z"/></svg>
<div class="lb w" style="left:155.9px;top:288.5px;width:299.9px">a2a.client.transports.jsonrpc.JsonRpcTransport.send_message</div>
<div class="bar" style="left:529px;top:292px;width:4px"></div>
<div class="sd" style="left:553.0px;top:292px">0.05<i>ms</i></div>
<svg class="ic w" style="left:124px;top:320px" viewBox="0 0 24 24"><path d="M14.59 7.41L18.17 11H6v2h12.17l-3.59 3.59L16 18l6-6-6-6-1.41 1.41zM2 6v12h2V6H2z"/></svg>
<div class="lb w" style="left:155.9px;top:320.5px;width:299.9px">a2a.client.transports.jsonrpc.JsonRpcTransport.send_message</div>
<div class="bar" style="left:529px;top:324px;width:4px"></div>
<div class="sd" style="left:553.0px;top:324px">0.01<i>ms</i></div>
<svg class="ic w" style="left:124px;top:352px" viewBox="0 0 24 24"><path d="M14.59 7.41L18.17 11H6v2h12.17l-3.59 3.59L16 18l6-6-6-6-1.41 1.41zM2 6v12h2V6H2z"/></svg>
<div class="lb w" style="left:155.9px;top:352.5px;width:299.9px">a2a.client.transports.jsonrpc.JsonRpcTransport.send_message</div>
<div class="bar" style="left:529px;top:356px;width:80px">3053.30<i>ms</i></div>
<svg class="ic b" style="left:64px;top:384px" viewBox="0 0 24 24"><path d="M4 4h16v12H5.170L4 17.170V4m0-2c-1.100 0-1.990.900-1.990 2L2 22l4-4h14c1.100 0 2-.900 2-2V4c0-1.100-.900-2-2-2H4zm2 10h8v2H6v-2zm0-3h12v2H6V9zm0-3h12v2H6V6z"/></svg>
<div class="lb b" style="left:95.9px;top:384.5px;width:359.9px">call_llm</div>
<div class="bar" style="left:605px;top:388px;width:327px">13051.55<i>ms</i></div>
<svg class="ic b" style="left:84px;top:416px" viewBox="0 0 24 24"><path d="M14.59 7.41L18.17 11H6v2h12.17l-3.59 3.59L16 18l6-6-6-6-1.41 1.41zM2 6v12h2V6H2z"/></svg>
<div class="lb b" style="left:115.9px;top:416.5px;width:339.9px">execute_tool transfer_to_agent</div>
<div class="bar" style="left:676px;top:420px;width:4px"></div>
<div class="sd" style="left:700.0px;top:420px">0.24<i>ms</i></div>
<svg class="ic w" style="left:84px;top:448px" viewBox="0 0 24 24"><path d="M13.49 5.48c1.1 0 2-.9 2-2s-.9-2-2-2-2 .9-2 2 .9 2 2 2zm-3.6 13.9l1-4.4 2.1 2v6h2v-7.5l-2.1-2 .6-3c1.3 1.5 3.3 2.5 5.5 2.5v-2c-1.9 0-3.5-1-4.3-2.4l-1-1.6c-.4-.6-1-1-1.7-1-.3 0-.5.1-.8.1l-5.2 2.2v4.700h2v-3.400l1.800-.700-1.600 8.100-4.900-1-.400 2 7 1.400z"/></svg>
<div class="lb w" style="left:115.9px;top:448.5px;width:339.9px">agent_run [root_agent]</div>
<div class="bar" style="left:676px;top:452px;width:256px">10187.34<i>ms</i></div>
<svg class="ic b" style="left:104px;top:480px" viewBox="0 0 24 24"><path d="M4 4h16v12H5.170L4 17.170V4m0-2c-1.100 0-1.990.900-1.990 2L2 22l4-4h14c1.100 0 2-.900 2-2V4c0-1.100-.900-2-2-2H4zm2 10h8v2H6v-2zm0-3h12v2H6V9zm0-3h12v2H6V6z"/></svg>
<div class="lb b" style="left:135.9px;top:480.5px;width:319.9px">call_llm</div>
<div class="bar" style="left:676px;top:484px;width:104px">4042.30<i>ms</i></div>
<svg class="ic b" style="left:124px;top:512px" viewBox="0 0 24 24"><path d="M14.59 7.41L18.17 11H6v2h12.17l-3.59 3.59L16 18l6-6-6-6-1.41 1.41zM2 6v12h2V6H2z"/></svg>
<div class="lb b" style="left:155.9px;top:512.5px;width:299.9px">execute_tool create_payment_mandate</div>
<div class="bar" style="left:776px;top:516px;width:4px"></div>
<div class="sd" style="left:800.0px;top:516px">0.27<i>ms</i></div>
<svg class="ic b" style="left:104px;top:544px" viewBox="0 0 24 24"><path d="M4 4h16v12H5.170L4 17.170V4m0-2c-1.100 0-1.990.900-1.990 2L2 22l4-4h14c1.100 0 2-.900 2-2V4c0-1.100-.900-2-2-2H4zm2 10h8v2H6v-2zm0-3h12v2H6V9zm0-3h12v2H6V6z"/></svg>
<div class="lb b" style="left:135.9px;top:544.5px;width:319.9px">call_llm</div>
<div class="bar" style="left:776px;top:548px;width:156px">6134.24<i>ms</i></div>
</div>
<div class="card" style="top:3614px;height:684px">
<div class="hd"><div class="hdt">yes</div><svg class="chev" viewBox="0 0 24 24"><path d="M7.410 15.410L12 10.830l4.590 4.580L18 14l-6-6-6 6z"/></svg></div>
<div class="idl">Invocation ID:</div><div class="idv">e-043ecdca-b3d0-4aa4-bda1-74331e69af3d</div>
<svg class="ic w" style="left:24px;top:128px" viewBox="0 0 24 24"><path d="M14.59 7.41L18.17 11H6v2h12.17l-3.59 3.59L16 18l6-6-6-6-1.41 1.41zM2 6v12h2V6H2z"/></svg>
<div class="lb w" style="left:55.9px;top:128.5px;width:399.9px">invocation</div>
<div class="bar" style="left:456px;top:132px;width:476px">33060.33<i>ms</i></div>
<svg class="ic w" style="left:44px;top:160px" viewBox="0 0 24 24"><path d="M13.49 5.48c1.1 0 2-.9 2-2s-.9-2-2-2-2 .9-2 2 .9 2 2 2zm-3.6 13.9l1-4.4 2.1 2v6h2v-7.5l-2.1-2 .6-3c1.3 1.5 3.3 2.5 5.5 2.5v-2c-1.9 0-3.5-1-4.3-2.4l-1-1.6c-.4-.6-1-1-1.7-1-.3 0-.5.1-.8.1l-5.2 2.2v4.700h2v-3.400l1.800-.700-1.600 8.100-4.900-1-.400 2 7 1.400z"/></svg>
<div class="lb w" style="left:75.9px;top:160.5px;width:379.9px">agent_run [root_agent]</div>
<div class="bar" style="left:456px;top:164px;width:476px">33057.13<i>ms</i></div>
<svg class="ic b" style="left:64px;top:192px" viewBox="0 0 24 24"><path d="M4 4h16v12H5.170L4 17.170V4m0-2c-1.100 0-1.990.900-1.990 2L2 22l4-4h14c1.100 0 2-.900 2-2V4c0-1.100-.900-2-2-2H4zm2 10h8v2H6v-2zm0-3h12v2H6V9zm0-3h12v2H6V6z"/></svg>
<div class="lb b" style="left:95.9px;top:192.5px;width:359.9px">call_llm</div>
<div class="bar" style="left:456px;top:196px;width:52px">3395.87<i>ms</i></div>
<svg class="ic b" style="left:84px;top:224px" viewBox="0 0 24 24"><path d="M14.59 7.41L18.17 11H6v2h12.17l-3.59 3.59L16 18l6-6-6-6-1.41 1.41zM2 6v12h2V6H2z"/></svg>
<div class="lb b" style="left:115.9px;top:224.5px;width:339.9px">execute_tool sign_mandates_on_user_device</div>
<div class="bar" style="left:505px;top:228px;width:4px"></div>
<div class="sd" style="left:529.0px;top:228px">0.24<i>ms</i></div>
<svg class="ic b" style="left:64px;top:256px" viewBox="0 0 24 24"><path d="M4 4h16v12H5.170L4 17.170V4m0-2c-1.100 0-1.990.900-1.990 2L2 22l4-4h14c1.100 0 2-.900 2-2V4c0-1.100-.900-2-2-2H4zm2 10h8v2H6v-2zm0-3h12v2H6V9zm0-3h12v2H6V6z"/></svg>
<div class="lb b" style="left:95.9px;top:256.5px;width:359.9px">call_llm</div>
<div class="bar" style="left:505px;top:260px;width:151px">10265.18<i>ms</i></div>
<svg class="ic b" style="left:84px;top:288px" viewBox="0 0 24 24"><path d="M14.59 7.41L18.17 11H6v2h12.17l-3.59 3.59L16 18l6-6-6-6-1.41 1.41zM2 6v12h2V6H2z"/></svg>
<div class="lb b" style="left:115.9px;top:288.5px;width:339.9px">execute_tool send_signed_payment_mandate_to_credentials_provider</div>
<div class="bar" style="left:604px;top:292px;width:51px">3326.61<i>ms</i></div>
<svg class="ic w" style="left:104px;top:320px" viewBox="0 0 24 24"><path d="M14.59 7.41L18.17 11H6v2h12.17l-3.59 3.59L16 18l6-6-6-6-1.41 1.41zM2 6v12h2V6H2z"/></svg>
<div class="lb w" style="left:135.9px;top:320.5px;width:319.9px">a2a.client.transports.jsonrpc.JsonRpcTransport.send_message</div>
<div class="bar" style="left:604px;top:324px;width:51px">3322.22<i>ms</i></div>
<svg class="ic w" style="left:124px;top:352px" viewBox="0 0 24 24"><path d="M14.59 7.41L18.17 11H6v2h12.17l-3.59 3.59L16 18l6-6-6-6-1.41 1.41zM2 6v12h2V6H2z"/></svg>
<div class="lb w" style="left:155.9px;top:352.5px;width:299.9px">a2a.client.transports.jsonrpc.JsonRpcTransport.send_message</div>
<div class="bar" style="left:604px;top:356px;width:4px"></div>
<div class="sd" style="left:628.0px;top:356px">0.06<i>ms</i></div>
<svg class="ic w" style="left:124px;top:384px" viewBox="0 0 24 24"><path d="M14.59 7.41L18.17 11H6v2h12.17l-3.59 3.59L16 18l6-6-6-6-1.41 1.41zM2 6v12h2V6H2z"/></svg>
<div class="lb w" style="left:155.9px;top:384.5px;width:299.9px">a2a.client.transports.jsonrpc.JsonRpcTransport.send_message</div>
<div class="bar" style="left:604px;top:388px;width:4px"></div>
<div class="sd" style="left:628.0px;top:388px">0.01<i>ms</i></div>
<svg class="ic w" style="left:124px;top:416px" viewBox="0 0 24 24"><path d="M14.59 7.41L18.17 11H6v2h12.17l-3.59 3.59L16 18l6-6-6-6-1.41 1.41zM2 6v12h2V6H2z"/></svg>
<div class="lb w" style="left:155.9px;top:416.5px;width:299.9px">a2a.client.transports.jsonrpc.JsonRpcTransport.send_message</div>
<div class="bar" style="left:604px;top:420px;width:51px">3321.77<i>ms</i></div>
<svg class="ic b" style="left:64px;top:448px" viewBox="0 0 24 24"><path d="M4 4h16v12H5.170L4 17.170V4m0-2c-1.100 0-1.990.900-1.990 2L2 22l4-4h14c1.100 0 2-.900 2-2V4c0-1.100-.900-2-2-2H4zm2 10h8v2H6v-2zm0-3h12v2H6V9zm0-3h12v2H6V6z"/></svg>
<div class="lb b" style="left:95.9px;top:448.5px;width:359.9px">call_llm</div>
<div class="bar" style="left:651px;top:452px;width:198px">13562.77<i>ms</i></div>
<svg class="ic b" style="left:84px;top:480px" viewBox="0 0 24 24"><path d="M14.59 7.41L18.17 11H6v2h12.17l-3.59 3.59L16 18l6-6-6-6-1.41 1.41zM2 6v12h2V6H2z"/></svg>
<div class="lb b" style="left:115.9px;top:480.5px;width:339.9px">execute_tool initiate_payment</div>
<div class="bar" style="left:740px;top:484px;width:109px">7359.37<i>ms</i></div>
<svg class="ic w" style="left:104px;top:512px" viewBox="0 0 24 24"><path d="M14.59 7.41L18.17 11H6v2h12.17l-3.59 3.59L16 18l6-6-6-6-1.41 1.41zM2 6v12h2V6H2z"/></svg>
<div class="lb w" style="left:135.9px;top:512.5px;width:319.9px">a2a.client.transports.jsonrpc.JsonRpcTransport.send_message</div>
<div class="bar" style="left:740px;top:516px;width:109px">7358.81<i>ms</i></div>
<svg class="ic w" style="left:124px;top:544px" viewBox="0 0 24 24"><path d="M14.59 7.41L18.17 11H6v2h12.17l-3.59 3.59L16 18l6-6-6-6-1.41 1.41zM2 6v12h2V6H2z"/></svg>
<div class="lb w" style="left:155.9px;top:544.5px;width:299.9px">a2a.client.transports.jsonrpc.JsonRpcTransport.send_message</div>
<div class="bar" style="left:740px;top:548px;width:4px"></div>
<div class="sd" style="left:764.0px;top:548px">0.01<i>ms</i></div>
<svg class="ic w" style="left:124px;top:576px" viewBox="0 0 24 24"><path d="M14.59 7.41L18.17 11H6v2h12.17l-3.59 3.59L16 18l6-6-6-6-1.41 1.41zM2 6v12h2V6H2z"/></svg>
<div class="lb w" style="left:155.9px;top:576.5px;width:299.9px">a2a.client.transports.jsonrpc.JsonRpcTransport.send_message</div>
<div class="bar" style="left:740px;top:580px;width:4px"></div>
<div class="sd" style="left:764.0px;top:580px">0.01<i>ms</i></div>
<svg class="ic w" style="left:124px;top:608px" viewBox="0 0 24 24"><path d="M14.59 7.41L18.17 11H6v2h12.17l-3.59 3.59L16 18l6-6-6-6-1.41 1.41zM2 6v12h2V6H2z"/></svg>
<div class="lb w" style="left:155.9px;top:608.5px;width:299.9px">a2a.client.transports.jsonrpc.JsonRpcTransport.send_message</div>
<div class="bar" style="left:740px;top:612px;width:109px">7358.36<i>ms</i></div>
<svg class="ic b" style="left:64px;top:640px" viewBox="0 0 24 24"><path d="M4 4h16v12H5.170L4 17.170V4m0-2c-1.100 0-1.990.900-1.990 2L2 22l4-4h14c1.100 0 2-.900 2-2V4c0-1.100-.900-2-2-2H4zm2 10h8v2H6v-2zm0-3h12v2H6V9zm0-3h12v2H6V6z"/></svg>
<div class="lb b" style="left:95.9px;top:640.5px;width:359.9px">call_llm</div>
<div class="bar" style="left:845px;top:644px;width:87px">5806.64<i>ms</i></div>
</div>
<div class="card" style="top:4303px;height:588px">
<div class="hd"><div class="hdt">123</div><svg class="chev" viewBox="0 0 24 24"><path d="M7.410 15.410L12 10.830l4.590 4.580L18 14l-6-6-6 6z"/></svg></div>
<div class="idl">Invocation ID:</div><div class="idv">e-cfcf21a2-6124-44ae-a57e-c9dd29719a21</div>
<svg class="ic w" style="left:24px;top:128px" viewBox="0 0 24 24"><path d="M14.59 7.41L18.17 11H6v2h12.17l-3.59 3.59L16 18l6-6-6-6-1.41 1.41zM2 6v12h2V6H2z"/></svg>
<div class="lb w" style="left:55.9px;top:128.5px;width:399.9px">invocation</div>
<div class="bar" style="left:456px;top:132px;width:476px">20543.21<i>ms</i></div>
<svg class="ic w" style="left:44px;top:160px" viewBox="0 0 24 24"><path d="M13.49 5.48c1.1 0 2-.9 2-2s-.9-2-2-2-2 .9-2 2 .9 2 2 2zm-3.6 13.9l1-4.4 2.1 2v6h2v-7.5l-2.1-2 .6-3c1.3 1.5 3.3 2.5 5.5 2.5v-2c-1.9 0-3.5-1-4.3-2.4l-1-1.6c-.4-.6-1-1-1.7-1-.3 0-.5.1-.8.1l-5.2 2.2v4.700h2v-3.400l1.800-.700-1.600 8.100-4.900-1-.400 2 7 1.400z"/></svg>
<div class="lb w" style="left:75.9px;top:160.5px;width:379.9px">agent_run [root_agent]</div>
<div class="bar" style="left:456px;top:164px;width:476px">20539.15<i>ms</i></div>
<svg class="ic b" style="left:64px;top:192px" viewBox="0 0 24 24"><path d="M4 4h16v12H5.170L4 17.170V4m0-2c-1.100 0-1.990.900-1.990 2L2 22l4-4h14c1.100 0 2-.900 2-2V4c0-1.100-.900-2-2-2H4zm2 10h8v2H6v-2zm0-3h12v2H6V9zm0-3h12v2H6V6z"/></svg>
<div class="lb b" style="left:95.9px;top:192.5px;width:359.9px">call_llm</div>
<div class="bar" style="left:456px;top:196px;width:343px">14738.79<i>ms</i></div>
<svg class="ic b" style="left:84px;top:224px" viewBox="0 0 24 24"><path d="M14.59 7.41L18.17 11H6v2h12.17l-3.59 3.59L16 18l6-6-6-6-1.41 1.41zM2 6v12h2V6H2z"/></svg>
<div class="lb b" style="left:115.9px;top:224.5px;width:339.9px">execute_tool initiate_payment_with_otp</div>
<div class="bar" style="left:543px;top:228px;width:256px">10957.75<i>ms</i></div>
<svg class="ic w" style="left:104px;top:256px" viewBox="0 0 24 24"><path d="M14.59 7.41L18.17 11H6v2h12.17l-3.59 3.59L16 18l6-6-6-6-1.41 1.41zM2 6v12h2V6H2z"/></svg>
<div class="lb w" style="left:135.9px;top:256.5px;width:319.9px">a2a.client.transports.jsonrpc.JsonRpcTransport.send_message</div>
<div class="bar" style="left:543px;top:260px;width:256px">10957.08<i>ms</i></div>
<svg class="ic w" style="left:124px;top:288px" viewBox="0 0 24 24"><path d="M14.59 7.41L18.17 11H6v2h12.17l-3.59 3.59L16 18l6-6-6-6-1.41 1.41zM2 6v12h2V6H2z"/></svg>
<div class="lb w" style="left:155.9px;top:288.5px;width:299.9px">a2a.client.transports.jsonrpc.JsonRpcTransport.send_message</div>
<div class="bar" style="left:543px;top:292px;width:4px"></div>
<div class="sd" style="left:567.0px;top:292px">0.01<i>ms</i></div>
<svg class="ic w" style="left:124px;top:320px" viewBox="0 0 24 24"><path d="M14.59 7.41L18.17 11H6v2h12.17l-3.59 3.59L16 18l6-6-6-6-1.41 1.41zM2 6v12h2V6H2z"/></svg>
<div class="lb w" style="left:155.9px;top:320.5px;width:299.9px">a2a.client.transports.jsonrpc.JsonRpcTransport.send_message</div>
<div class="bar" style="left:543px;top:324px;width:4px"></div>
<div class="sd" style="left:567.0px;top:324px">0.01<i>ms</i></div>
<svg class="ic w" style="left:124px;top:352px" viewBox="0 0 24 24"><path d="M14.59 7.41L18.17 11H6v2h12.17l-3.59 3.59L16 18l6-6-6-6-1.41 1.41zM2 6v12h2V6H2z"/></svg>
<div class="lb w" style="left:155.9px;top:352.5px;width:299.9px">a2a.client.transports.jsonrpc.JsonRpcTransport.send_message</div>
<div class="bar" style="left:543px;top:356px;width:256px">10956.70<i>ms</i></div>
<svg class="ic b" style="left:64px;top:384px" viewBox="0 0 24 24"><path d="M4 4h16v12H5.170L4 17.170V4m0-2c-1.100 0-1.990.900-1.990 2L2 22l4-4h14c1.100 0 2-.900 2-2V4c0-1.100-.900-2-2-2H4zm2 10h8v2H6v-2zm0-3h12v2H6V9zm0-3h12v2H6V6z"/></svg>
<div class="lb b" style="left:95.9px;top:384.5px;width:359.9px">call_llm</div>
<div class="bar" style="left:795px;top:388px;width:137px">5784.89<i>ms</i></div>
</div>
<div class="abs" style="left:22px;top:2232px;width:952px;height:14px;background:#333537"></div>
<svg class="abs" style="left:22px;top:2234px" width="16" height="12" viewBox="0 0 16 12"><path d="M0 0 V12 H11 Q0 12 0 2 Z" fill="#1b1b1b"/></svg>
<svg class="abs" style="left:966px;top:2235px" width="8" height="11" viewBox="0 0 8 11"><path d="M8 1 V11 H3.200 Q8 9.500 8 1 Z" fill="#1b1b1b"/></svg>
</body></html>
